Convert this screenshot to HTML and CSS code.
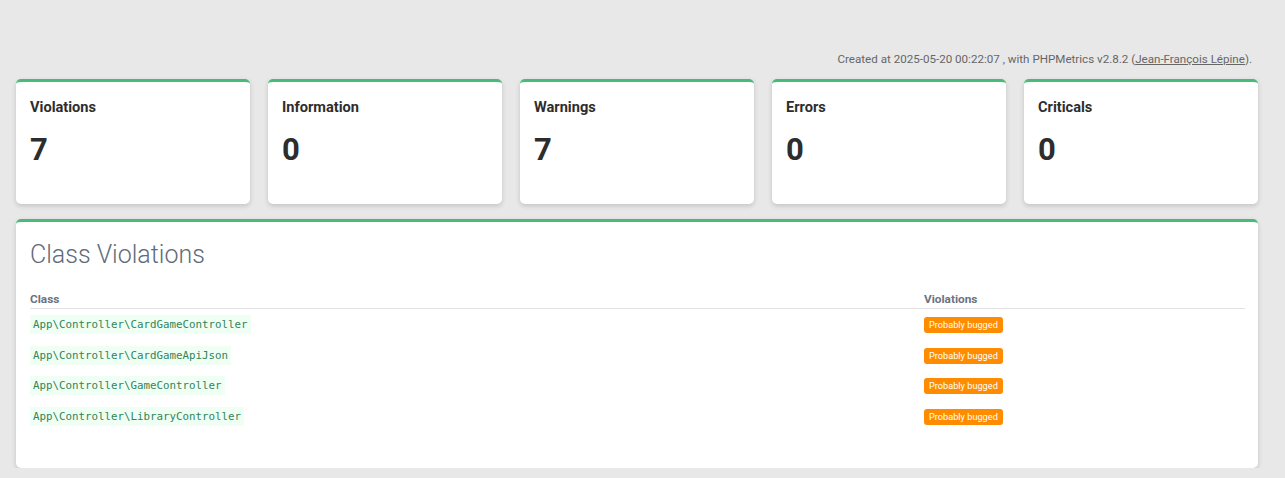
FILE: index.html
```html
<!DOCTYPE html>
<html>
<head>
<meta charset="utf-8">
<link rel="stylesheet" href="styles.css">
</head>
<body>
<div class="page">
  <div class="meta">Created at 2025-05-20 00:22:07 , with PHPMetrics v2.8.2 (<a href="#">Jean-François Lépine</a>).</div>
  <div class="cards">
    <div class="card"><div class="label">Violations</div><div class="num">7</div></div>
    <div class="card"><div class="label">Information</div><div class="num">0</div></div>
    <div class="card"><div class="label">Warnings</div><div class="num">7</div></div>
    <div class="card"><div class="label">Errors</div><div class="num">0</div></div>
    <div class="card"><div class="label">Criticals</div><div class="num">0</div></div>
  </div>
  <div class="panel">
    <h2 class="title">Class Violations</h2>
    <table class="tbl">
      <thead><tr><th class="c1">Class</th><th>Violations</th></tr></thead>
      <tbody>
        <tr><td><code>App\Controller\CardGameController</code></td><td><span class="badge">Probably bugged</span></td></tr>
        <tr><td><code>App\Controller\CardGameApiJson</code></td><td><span class="badge">Probably bugged</span></td></tr>
        <tr><td><code>App\Controller\GameController</code></td><td><span class="badge">Probably bugged</span></td></tr>
        <tr><td><code>App\Controller\LibraryController</code></td><td><span class="badge">Probably bugged</span></td></tr>
      </tbody>
    </table>
  </div>
</div>
</body>
</html>
```
FILE: styles.css
```css
html, body { margin: 0; padding: 0; }
body {
  background: #e8e8e8;
  font-family: Roboto, "Liberation Sans", Arial, sans-serif;
  color: #333;
}
.page { padding: 52px 27px 0 16px; }
.meta {
  text-align: right;
  font-size: 11.6px;
  color: #666;
  line-height: 15px;
  margin: 0 6px 12px 0;
}
.meta a { color: #666; }
.cards {
  display: grid;
  grid-template-columns: repeat(5, 1fr);
  gap: 18px;
}
.card, .panel {
  background: #fff;
  border-top: 3px solid #48bb78;
  border-radius: 5px;
  box-shadow: 0 2px 5px rgba(0,0,0,0.16);
}
.card {
  height: 125px;
  box-sizing: border-box;
  padding: 16px 14px 0;
}
.label { font-size: 14.6px; font-weight: 700; color: #2d2d2d; line-height: 18px; }
.num { font-size: 31px; font-weight: 700; color: #2d2d2d; margin-top: 16px; line-height: 36px; }
.panel {
  margin-top: 15px;
  height: 249px;
  box-sizing: border-box;
  padding: 16px 13px 0 14px;
}
.title {
  margin: 0;
  font-size: 25px;
  font-weight: 300;
  color: #5f6b7a;
  line-height: 34px;
}
.tbl {
  width: 100%;
  border-collapse: collapse;
  margin-top: 20px;
}
.tbl th {
  text-align: left;
  font-size: 11.8px;
  font-weight: 700;
  color: #6b7280;
  padding: 0 0 2px;
  border-bottom: 1px solid #e2e2e2;
  line-height: 14px;
}
.tbl th.c1 { width: 894px; }
.tbl td { padding: 5px 0 0; height: 25.7px; vertical-align: top; }
.tbl tbody tr:first-child td { padding-top: 4px; }
code {
  display: inline-block;
  font-family: "DejaVu Sans Mono", "Liberation Mono", monospace;
  font-size: 10.8px;
  line-height: 13px;
  color: #2f855a;
  background: #f0fff4;
  padding: 3px 3px;
}
.badge {
  display: inline-block;
  margin-top: 1px;
  background: #ff8c00;
  color: #fff;
  font-size: 9.2px;
  line-height: 16px;
  padding: 0 5px;
  border-radius: 3px;
}
```
